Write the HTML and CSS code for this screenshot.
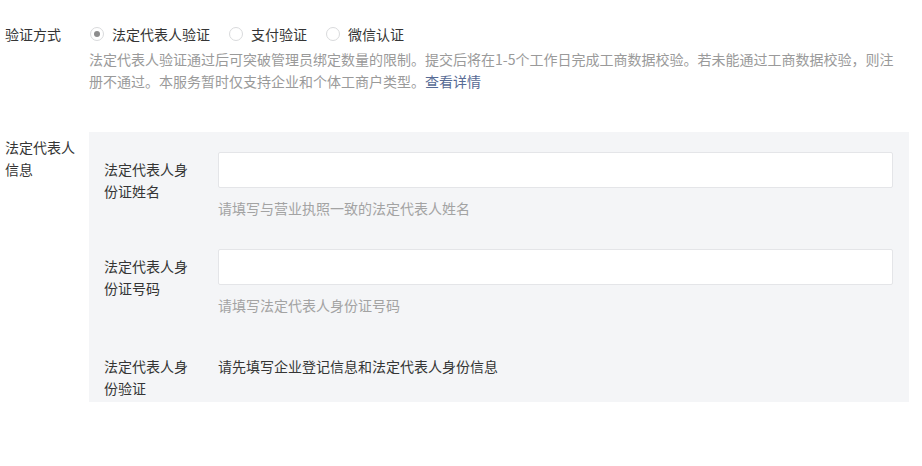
FILE: index.html
```html
<!DOCTYPE html>
<html lang="zh-CN">
<head>
<meta charset="utf-8">
<title>法定代表人验证</title>
<link rel="stylesheet" href="styles.css">
</head>
<body>
<div class="form">
  <div class="field">
    <div class="field-label">验证方式</div>
    <div class="field-body">
      <div class="radios">
        <label class="radio"><span class="radio-dot checked"></span><span>法定代表人验证</span></label>
        <label class="radio"><span class="radio-dot"></span><span>支付验证</span></label>
        <label class="radio"><span class="radio-dot"></span><span>微信认证</span></label>
      </div>
      <p class="desc">法定代表人验证通过后可突破管理员绑定数量的限制。提交后将在1-5个工作日完成工商数据校验。若未能通过工商数据校验，则注册不通过。本服务暂时仅支持企业和个体工商户类型。<a class="link" href="#">查看详情</a></p>
    </div>
  </div>

  <div class="field field-info">
    <div class="field-label label-info">法定代表人信息</div>
    <div class="panel">
      <div class="row">
        <div class="row-label">法定代表人身份证姓名</div>
        <div class="row-body">
          <div class="input"></div>
          <div class="hint">请填写与营业执照一致的法定代表人姓名</div>
        </div>
      </div>
      <div class="row">
        <div class="row-label">法定代表人身份证号码</div>
        <div class="row-body">
          <div class="input"></div>
          <div class="hint">请填写法定代表人身份证号码</div>
        </div>
      </div>
      <div class="row row-last">
        <div class="row-label">法定代表人身份验证</div>
        <div class="row-body">
          <div class="static">请先填写企业登记信息和法定代表人身份信息</div>
        </div>
      </div>
    </div>
  </div>
</div>
</body>
</html>
```
FILE: styles.css
```css
html, body {
  margin: 0;
  padding: 0;
  background: #ffffff;
}
body {
  font-family: "Noto Sans CJK SC", "Microsoft YaHei", "Noto Sans", sans-serif;
  font-size: 14px;
  line-height: 22px;
  color: #353535;
}
.form {
  padding: 23px 0 0 5px;
}
.field {
  display: flex;
}
.field-label {
  width: 84px;
  flex: none;
  color: #353535;
}
.field-body {
  width: 810px;
}
.radios {
  display: flex;
  align-items: center;
  height: 22px;
}
.radio {
  display: flex;
  align-items: center;
  margin-right: 18px;
  color: #353535;
}
.radio-dot {
  width: 12px;
  height: 12px;
  border: 1px solid #d9dadc;
  border-radius: 50%;
  margin: 0 8px 0 1px;
  background: #fff;
  display: flex;
  align-items: center;
  justify-content: center;
}
.radio-dot.checked::after {
  content: "";
  width: 6px;
  height: 6px;
  border-radius: 50%;
  background: #8d8d8d;
}
.desc {
  margin: 3px 0 0;
  color: #9a9a9a;
}
.link {
  color: #576b95;
  text-decoration: none;
}
.field-info {
  margin-top: 40px;
}
.label-info {
  width: 76px;
  margin-right: 8px;
  padding-top: 4px;
}
.panel {
  width: 820px;
  background: #f4f5f7;
  padding: 20px 16px 3px 15px;
  box-sizing: border-box;
}
.row {
  display: flex;
  margin-bottom: 30px;
}
.row-last {
  margin-bottom: 0;
}
.row-label {
  width: 90px;
  margin-right: 24px;
  flex: none;
  padding-top: 6px;
  color: #353535;
}
.row-last .row-label {
  padding-top: 9px;
}
.row-body {
  flex: 1;
}
.input {
  height: 36px;
  box-sizing: border-box;
  background: #fff;
  border: 1px solid #e4e5e8;
  border-radius: 2px;
}
.hint {
  margin-top: 9px;
  color: #a3a3a3;
}
.static {
  padding-top: 9px;
  color: #353535;
}
```
